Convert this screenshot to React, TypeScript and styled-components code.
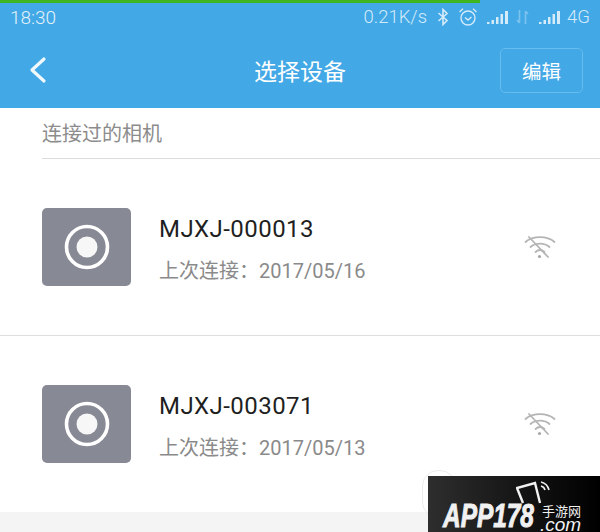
import React from "react";
import styled, { createGlobalStyle } from "styled-components";

const CJK = `"Noto Sans CJK SC", "Noto Sans", sans-serif`;
const LATIN = `Roboto, "Noto Sans CJK SC", sans-serif`;

const GlobalStyle = createGlobalStyle`
  html, body {
    margin: 0;
    padding: 0;
    background: #f4f4f4;
  }
`;

const Screen = styled.div`
  position: relative;
  width: 600px;
  height: 532px;
  overflow: hidden;
  background: #f4f4f4;
`;

const Header = styled.header`
  position: relative;
  height: 108px;
  background: #42a8e6;
  color: #fff;
`;

const Progress = styled.div`
  position: absolute;
  top: 0;
  left: 0;
  width: 480px;
  height: 3px;
  background: #3fb51f;
`;

const StatusBar = styled.div`
  height: 36px;
  display: flex;
  align-items: center;
  justify-content: space-between;
  padding: 0 10px 2px;
  box-sizing: border-box;
`;

const Clock = styled.span`
  font: 300 19px ${LATIN};
  color: #e4f2fb;
`;

const StatusIcons = styled.div`
  display: flex;
  align-items: center;
  color: #d4ebfa;
  font: 300 18.5px ${LATIN};
`;

const Spacer = styled.span<{ $w: number }>`
  width: ${(p) => p.$w}px;
`;

const NavBar = styled.div`
  height: 72px;
  display: flex;
  align-items: center;
  justify-content: space-between;
  padding: 0 17px 4px 28px;
  box-sizing: border-box;
`;

const Title = styled.h1`
  position: absolute;
  left: 0;
  right: 0;
  margin: 0;
  text-align: center;
  font: 400 23px ${CJK};
  color: #fff;
  pointer-events: none;
`;

const EditButton = styled.button`
  width: 83px;
  height: 45px;
  border: 1px solid #66bbef;
  border-radius: 5px;
  background: none;
  color: #fff;
  font: 400 19.5px ${CJK};
  padding: 0;
`;

const BackButton = styled.button`
  display: flex;
  background: none;
  border: none;
  padding: 0;
`;

const List = styled.main`
  background: #fff;
`;

const SectionTitle = styled.div`
  height: 51px;
  margin-left: 42px;
  display: flex;
  align-items: center;
  box-sizing: border-box;
  padding-bottom: 2px;
  font: 400 20px ${CJK};
  color: #8c8c8c;
  border-bottom: 1px solid #dcdcdc;
`;

const Row = styled.div<{ $divided?: boolean }>`
  height: 176px;
  display: flex;
  align-items: center;
  padding: 0 44px 0 42px;
  border-bottom: ${(p) => (p.$divided ? "1px solid #dedede" : "none")};
`;

const Thumb = styled.div`
  width: 89px;
  height: 78px;
  flex: none;
  display: flex;
  align-items: center;
  justify-content: center;
  border-radius: 5px;
  background: #878995;
`;

const Info = styled.div`
  flex: 1;
  margin-left: 28px;
  padding-top: 3px;
  display: flex;
  flex-direction: column;
  gap: 14px;
`;

const DeviceName = styled.div`
  font: 400 24px/30px ${LATIN};
  color: #1f1f1f;
  letter-spacing: 0.45px;
`;

const LastSeen = styled.div`
  font: 400 20px/26px ${LATIN};
  color: #8a8a8a;
`;

const Footer = styled.div`
  height: 20px;
`;

const HomeRing = styled.div`
  position: absolute;
  left: 422px;
  top: 470px;
  width: 32px;
  height: 46px;
  border: 1px solid #ececec;
  border-radius: 16px;
`;

const Watermark = styled.div`
  position: absolute;
  right: 0;
  bottom: 0;
  width: 172px;
  height: 56px;
  overflow: hidden;
  background: linear-gradient(90deg, #2e2e2e 0%, #141414 55%, #000 100%);
`;

const WatermarkBrand = styled.span`
  position: absolute;
  left: 15px;
  top: 26px;
  font: italic 700 33px/28px "Liberation Sans", sans-serif;
  color: #f1f1f1;
  -webkit-text-stroke: 1px #f1f1f1;
  transform: scaleX(0.74);
  transform-origin: left center;
`;

const WatermarkCn = styled.span`
  position: absolute;
  left: 114px;
  top: 28px;
  font: 400 13px/13px ${CJK};
  color: #f1f1f1;
`;

const WatermarkDomain = styled.span`
  position: absolute;
  left: 112px;
  top: 41px;
  font: italic 400 19px/15px "Liberation Sans", sans-serif;
  color: #f1f1f1;
`;

const WatermarkPhone = styled.svg`
  position: absolute;
  left: 88px;
  top: 4px;
`;

const Bluetooth = () => (
  <svg width="12" height="18" viewBox="0 0 12 18" fill="none" stroke="#d4ebfa" strokeWidth="1.6">
    <path d="M1.5 5 10 12.5 6 16.5V1.5l4 4L1.5 13" />
  </svg>
);

const Alarm = () => (
  <svg width="18" height="20" viewBox="1 0 18 20" fill="none" stroke="#d4ebfa" strokeWidth="1.4">
    <circle cx="10" cy="11" r="7" />
    <path d="M7 10.500l3 2.500 3.500-3M1.500 5 5 1.800M18.500 5 15 1.800" />
  </svg>
);

const Signal = () => (
  <svg width="21" height="16" viewBox="0 0 21 16" fill="#d4ebfa">
    <rect x="0" y="13" width="2.500" height="2" />
    <rect x="4.500" y="11" width="2.500" height="4" />
    <rect x="9" y="8" width="2.500" height="7" />
    <rect x="13.500" y="5" width="2.500" height="10" />
    <rect x="18" y="2" width="3" height="13" />
  </svg>
);

const DataArrows = () => (
  <svg width="13" height="16" viewBox="0 0 13 16" fill="none" stroke="#7cc3ef" strokeWidth="1.6">
    <path d="M3.500 1v13M3.500 14 1 11M9.500 15V2M9.500 2 12 5" />
  </svg>
);

const BackArrow = () => (
  <svg width="20" height="28" viewBox="0 0 20 28" fill="none" stroke="#f2f9fd" strokeWidth="3.2" strokeLinecap="round" strokeLinejoin="round">
    <path d="M16 3 4 14l12 11" />
  </svg>
);

const CameraLens = () => (
  <svg width="46" height="46" viewBox="0 0 46 46">
    <circle cx="23" cy="23" r="20.500" fill="none" stroke="#fff" strokeWidth="3.600" />
    <circle cx="23" cy="23" r="10.500" fill="#f7f7f7" />
  </svg>
);

// wifi arcs with a slash through them: device is out of range
const WifiOff = () => (
  <svg width="32" height="26" viewBox="0 0 32 26" fill="none" stroke="#b5b5b5" strokeWidth="1.800" strokeLinecap="round">
    <path d="M1.500 8C9 1.500 23 1.500 30.500 8" />
    <path d="M6.500 13C11.500 8.500 20.500 8.500 25.500 13" />
    <path d="M11.500 18c2.700-2.400 6.300-2.400 9 0" />
    <path d="M5 3 24 23" />
    <circle cx="15.500" cy="22.500" r="1.600" fill="#a8a8a8" stroke="none" />
  </svg>
);

const devices = [
  { name: "MJXJ-000013", date: "2017/05/16" },
  { name: "MJXJ-003071", date: "2017/05/13" },
];

export default function App() {
  return (
    <Screen>
      <GlobalStyle />
      <Header>
        <Progress />
        <StatusBar>
          <Clock>18:30</Clock>
          <StatusIcons>
            <span>0.21K/s</span>
            <Spacer $w={10} />
            <Bluetooth />
            <Spacer $w={10} />
            <Alarm />
            <Spacer $w={10} />
            <Signal />
            <Spacer $w={8} />
            <DataArrows />
            <Spacer $w={10} />
            <Signal />
            <Spacer $w={7} />
            <span>4G</span>
          </StatusIcons>
        </StatusBar>
        <NavBar>
          <BackButton>
            <BackArrow />
          </BackButton>
          <Title>选择设备</Title>
          <EditButton>编辑</EditButton>
        </NavBar>
      </Header>
      <List>
        <SectionTitle>连接过的相机</SectionTitle>
        {devices.map((d, i) => (
          <Row key={d.name} $divided={i === 0}>
            <Thumb>
              <CameraLens />
            </Thumb>
            <Info>
              <DeviceName>{d.name}</DeviceName>
              <LastSeen>上次连接：{d.date}</LastSeen>
            </Info>
            <WifiOff />
          </Row>
        ))}
      </List>
      <Footer />
      <HomeRing />
      <Watermark>
        <WatermarkPhone width="40" height="30" viewBox="0 0 40 30" fill="none" stroke="#f1f1f1">
          <path d="M7 23 1 8 19 3l5 20" strokeWidth="2.400" />
          <path d="M25 2c4 1 7 4 8 8M25 6c2 .5 3.500 2 4 4" strokeWidth="1.600" />
        </WatermarkPhone>
        <WatermarkBrand>APP178</WatermarkBrand>
        <WatermarkCn>手游网</WatermarkCn>
        <WatermarkDomain>.com</WatermarkDomain>
      </Watermark>
    </Screen>
  );
}
